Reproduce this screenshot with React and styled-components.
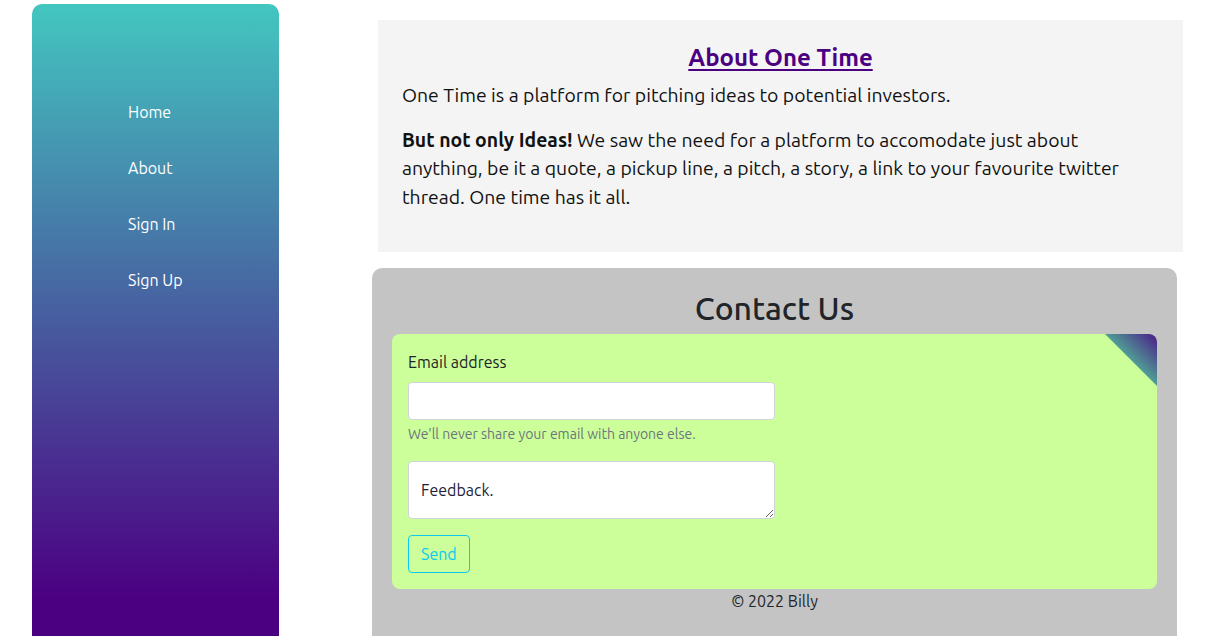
import React from 'react'
import styled, { createGlobalStyle } from 'styled-components'

const GlobalStyle = createGlobalStyle`
body{
    margin:0;
    font-family:"Ubuntu", Lato, "Noto Sans", sans-serif;
    color:#212529;
    background:#fff;
    overflow:hidden;
}
`

const Page = styled.div`
display:flex;
align-items:flex-start;
height:636px;
overflow:hidden;
`

const SideBar = styled.nav`
flex:0 0 247px;
margin:4px 0 0 32px;
height:660px;
border-radius:10px 10px 0 0;
background:linear-gradient(#43c6c0 0%, #4b0082 90%);
padding-top:92px;
box-sizing:border-box;
`

const NavLink = styled.a`
display:block;
height:56px;
line-height:24px;
padding:4px 0 0 96px;
box-sizing:border-box;
color:#fff;
font-size:16px;
text-decoration:none;
`

const Main = styled.main`
flex:0 0 805px;
width:805px;
min-width:0;
margin-left:93px;
`

const About = styled.section`
width:805px;
box-sizing:border-box;
margin:20px 0 16px 6px;
background:#f4f4f4;
padding:23px 40px 25px 24px;
`

const AboutTitle = styled.h2`
margin:0 0 9px;
text-align:center;
font-size:24px;
line-height:29px;
font-weight:700;
padding-left:16px;
a{
    color:#4b0082;
    text-decoration:underline;
    text-underline-offset:3px;
}
`

const Para = styled.p`
margin:0 0 16px;
font-size:19.4px;
line-height:28.5px;
color:#111;
`

const Contact = styled.section`
background:#c4c4c4;
border-radius:10px;
padding:21px 20px 40px;
`

const ContactTitle = styled.h1`
margin:0 0 7px;
text-align:center;
font-size:32px;
line-height:38px;
font-weight:500;
color:#212529;
`

const FormCard = styled.form`
position:relative;
overflow:hidden;
background:#ccff99;
border-radius:8px;
padding:16px;
&::after{
    content:"";
    position:absolute;
    top:0;
    right:0;
    width:52px;
    height:52px;
    clip-path:polygon(0 0, 100% 0, 100% 100%);
    background:linear-gradient(to top right, #4f9d95 50%, #4b1a8a 100%);
}
`

const Group = styled.div`
width:50%;
margin-bottom:16px;
`

const Label = styled.label`
display:block;
margin-bottom:8px;
font-size:16px;
line-height:24px;
`

const Input = styled.input`
display:block;
width:100%;
height:38px;
box-sizing:border-box;
border:1px solid #ced4da;
border-radius:4px;
background:#fff;
font:inherit;
padding:6px 12px;
`

const Help = styled.div`
margin-top:4px;
font-size:14px;
line-height:21px;
color:#6c757d;
`

const TextArea = styled.textarea`
display:block;
width:100%;
height:58px;
box-sizing:border-box;
border:1px solid #ced4da;
border-radius:4px;
background:#fff;
font:inherit;
font-size:16px;
line-height:24px;
padding:16px 12px;
resize:vertical;
&::placeholder{
    color:#1f1d3a;
    opacity:1;
}
`

const SendButton = styled.button`
height:38px;
padding:0 12px;
border:1px solid #0dcaf0;
border-radius:4px;
background:transparent;
color:#0dcaf0;
font:inherit;
font-size:16px;
cursor:pointer;
`

const Footer = styled.footer`
text-align:center;
font-size:16px;
line-height:24px;
`

const App = () => {
    const links = ["Home", "About", "Sign In", "Sign Up"]
    return (
        <>
            <GlobalStyle />
            <Page>
                <SideBar>
                    {links.map((l) => <NavLink key={l} href="#">{l}</NavLink>)}
                </SideBar>
                <Main>
                    <About>
                        <AboutTitle><a href="#">About One Time</a></AboutTitle>
                        <Para>One Time is a platform for pitching ideas to potential investors.</Para>
                        <Para>
                            <b>But not only Ideas!</b> We saw the need for a platform to accomodate just about anything, be it a quote, a pickup line, a pitch, a story, a link to your favourite twitter thread. One time has it all.
                        </Para>
                    </About>
                    <Contact>
                        <ContactTitle>Contact Us</ContactTitle>
                        <FormCard onSubmit={(e) => e.preventDefault()}>
                            <Group>
                                <Label htmlFor="email">Email address</Label>
                                <Input id="email" type="email" />
                                <Help>We'll never share your email with anyone else.</Help>
                            </Group>
                            <Group>
                                <TextArea rows={1} placeholder="Feedback." />
                            </Group>
                            <SendButton type="submit">Send</SendButton>
                        </FormCard>
                        <Footer>© 2022 Billy</Footer>
                    </Contact>
                </Main>
            </Page>
        </>
    )
}

export default App
